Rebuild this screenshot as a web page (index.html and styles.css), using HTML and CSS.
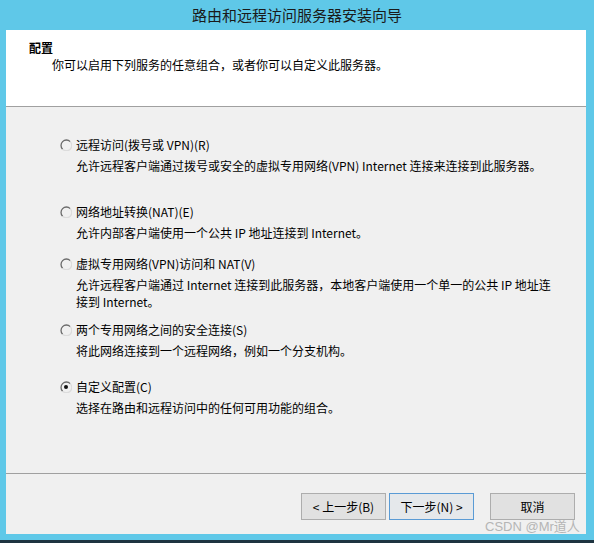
FILE: index.html
```html
<!DOCTYPE html>
<html lang="zh-CN">
<head>
<meta charset="utf-8">
<title>路由和远程访问服务器安装向导</title>
<link rel="stylesheet" href="styles.css">
</head>
<body>
<div class="window">
  <div class="titlebar">路由和远程访问服务器安装向导</div>
  <div class="frame">
    <div class="header">
      <div class="h-title">配置</div>
      <div class="h-sub">你可以启用下列服务的任意组合，或者你可以自定义此服务器。</div>
    </div>
    <div class="content">
      <div class="option">
        <div class="opt-label"><span class="radio"><svg viewBox="0 0 12 12" width="12" height="12"><path d="M10.2 2.6 A5 5 0 1 0 2.6 10.2" fill="none" stroke="#6a6a6a" stroke-width="1.3"/><path d="M10.2 2.6 A5 5 0 0 1 2.6 10.2" fill="none" stroke="#dcdcdc" stroke-width="1.3"/></svg></span>远程访问(拨号或 VPN)(R)</div>
        <div class="opt-desc">允许远程客户端通过拨号或安全的虚拟专用网络(VPN) Internet 连接来连接到此服务器。</div>
      </div>
      <div class="option gap2">
        <div class="opt-label"><span class="radio"><svg viewBox="0 0 12 12" width="12" height="12"><path d="M10.2 2.6 A5 5 0 1 0 2.6 10.2" fill="none" stroke="#6a6a6a" stroke-width="1.3"/><path d="M10.2 2.6 A5 5 0 0 1 2.6 10.2" fill="none" stroke="#dcdcdc" stroke-width="1.3"/></svg></span>网络地址转换(NAT)(E)</div>
        <div class="opt-desc">允许内部客户端使用一个公共 IP 地址连接到 Internet。</div>
      </div>
      <div class="option gap3">
        <div class="opt-label"><span class="radio"><svg viewBox="0 0 12 12" width="12" height="12"><path d="M10.2 2.6 A5 5 0 1 0 2.6 10.2" fill="none" stroke="#6a6a6a" stroke-width="1.3"/><path d="M10.2 2.6 A5 5 0 0 1 2.6 10.2" fill="none" stroke="#dcdcdc" stroke-width="1.3"/></svg></span>虚拟专用网络(VPN)访问和 NAT(V)</div>
        <div class="opt-desc">允许远程客户端通过 Internet 连接到此服务器，本地客户端使用一个单一的公共 IP 地址连<br>接到 Internet。</div>
      </div>
      <div class="option gap4">
        <div class="opt-label"><span class="radio"><svg viewBox="0 0 12 12" width="12" height="12"><path d="M10.2 2.6 A5 5 0 1 0 2.6 10.2" fill="none" stroke="#6a6a6a" stroke-width="1.3"/><path d="M10.2 2.6 A5 5 0 0 1 2.6 10.2" fill="none" stroke="#dcdcdc" stroke-width="1.3"/></svg></span>两个专用网络之间的安全连接(S)</div>
        <div class="opt-desc">将此网络连接到一个远程网络，例如一个分支机构。</div>
      </div>
      <div class="option gap5">
        <div class="opt-label"><span class="radio"><svg viewBox="0 0 12 12" width="12" height="12"><path d="M10.2 2.6 A5 5 0 1 0 2.6 10.2" fill="none" stroke="#6a6a6a" stroke-width="1.3"/><path d="M10.2 2.6 A5 5 0 0 1 2.6 10.2" fill="none" stroke="#dcdcdc" stroke-width="1.3"/><circle cx="6" cy="6" r="2" fill="#111"/></svg></span>自定义配置(C)</div>
        <div class="opt-desc">选择在路由和远程访问中的任何可用功能的组合。</div>
      </div>
    </div>
    <div class="footer">
      <button class="btn">&lt; 上一步(B)</button>
      <button class="btn focused">下一步(N) &gt;</button>
      <button class="btn cancel">取消</button>
      <span class="watermark">CSDN @Mr道人</span>
    </div>
  </div>
  <div class="bottom-edge"></div>
</div>
</body>
</html>
```

FILE: styles.css
```css
html, body {
  margin: 0;
  padding: 0;
}
body {
  width: 594px;
  height: 543px;
  overflow: hidden;
  background: #5fc8e8;
  font-family: "Noto Sans CJK SC", "Noto Sans", sans-serif;
  font-size: 12px;
  color: #000;
}
.window {
  width: 594px;
  height: 543px;
  display: flex;
  flex-direction: column;
}
.titlebar {
  height: 30px;
  line-height: 30px;
  text-align: center;
  font-size: 15px;
  color: #1a1a1a;
  padding-top: 0;
  box-sizing: border-box;
}
.frame {
  margin: 0 8px 0 6px;
  display: flex;
  flex-direction: column;
  position: relative;
}
.header {
  background: #fff;
  height: 77px;
  border-bottom: 1px solid #a0a0a0;
  padding: 9px 0 0 23px;
  box-sizing: border-box;
}
.h-title {
  font-weight: bold;
  line-height: 17px;
}
.h-sub {
  line-height: 17px;
  padding-left: 23px;
}
.content {
  background: #f0f0f0;
  height: 367px;
  box-sizing: border-box;
  padding: 29px 0 0 54px;
  border-bottom: 1px solid #a0a0a0;
}
.option {
  display: flex;
  flex-direction: column;
}
.gap2 { margin-top: 29px; }
.gap3 { margin-top: 14px; }
.gap4 { margin-top: 11px; }
.gap5 { margin-top: 19px; }
.opt-label {
  display: flex;
  align-items: center;
  line-height: 17px;
}
.radio {
  width: 12px;
  height: 12px;
  margin-right: 4px;
  display: inline-flex;
}
.opt-desc {
  line-height: 17px;
  margin-top: 4px;
  padding-left: 16px;
}
.footer {
  background: #f0f0f0;
  height: 60px;
  box-sizing: border-box;
  padding: 19px 11px 0 0;
  display: flex;
  justify-content: flex-end;
  align-items: flex-start;
  position: relative;
}
.btn {
  width: 85px;
  height: 27px;
  font-family: inherit;
  font-size: 12px;
  color: #000;
  background: #e1e1e1;
  border: 1px solid #adadad;
  padding: 0;
  margin: 0;
}
.btn.focused {
  margin-left: 3px;
  border-color: #5a9bd5;
  background: #e5e8eb;
}
.btn.cancel {
  margin-left: 16px;
}
.watermark {
  position: absolute;
  left: 479px;
  top: 45px;
  font-family: "Liberation Sans", "Noto Sans CJK SC", sans-serif;
  font-size: 13px;
  line-height: 16px;
  color: #b5b5b5;
}
.bottom-edge {
  margin-top: 6px;
  height: 3px;
  background: #1e3440;
}
```
